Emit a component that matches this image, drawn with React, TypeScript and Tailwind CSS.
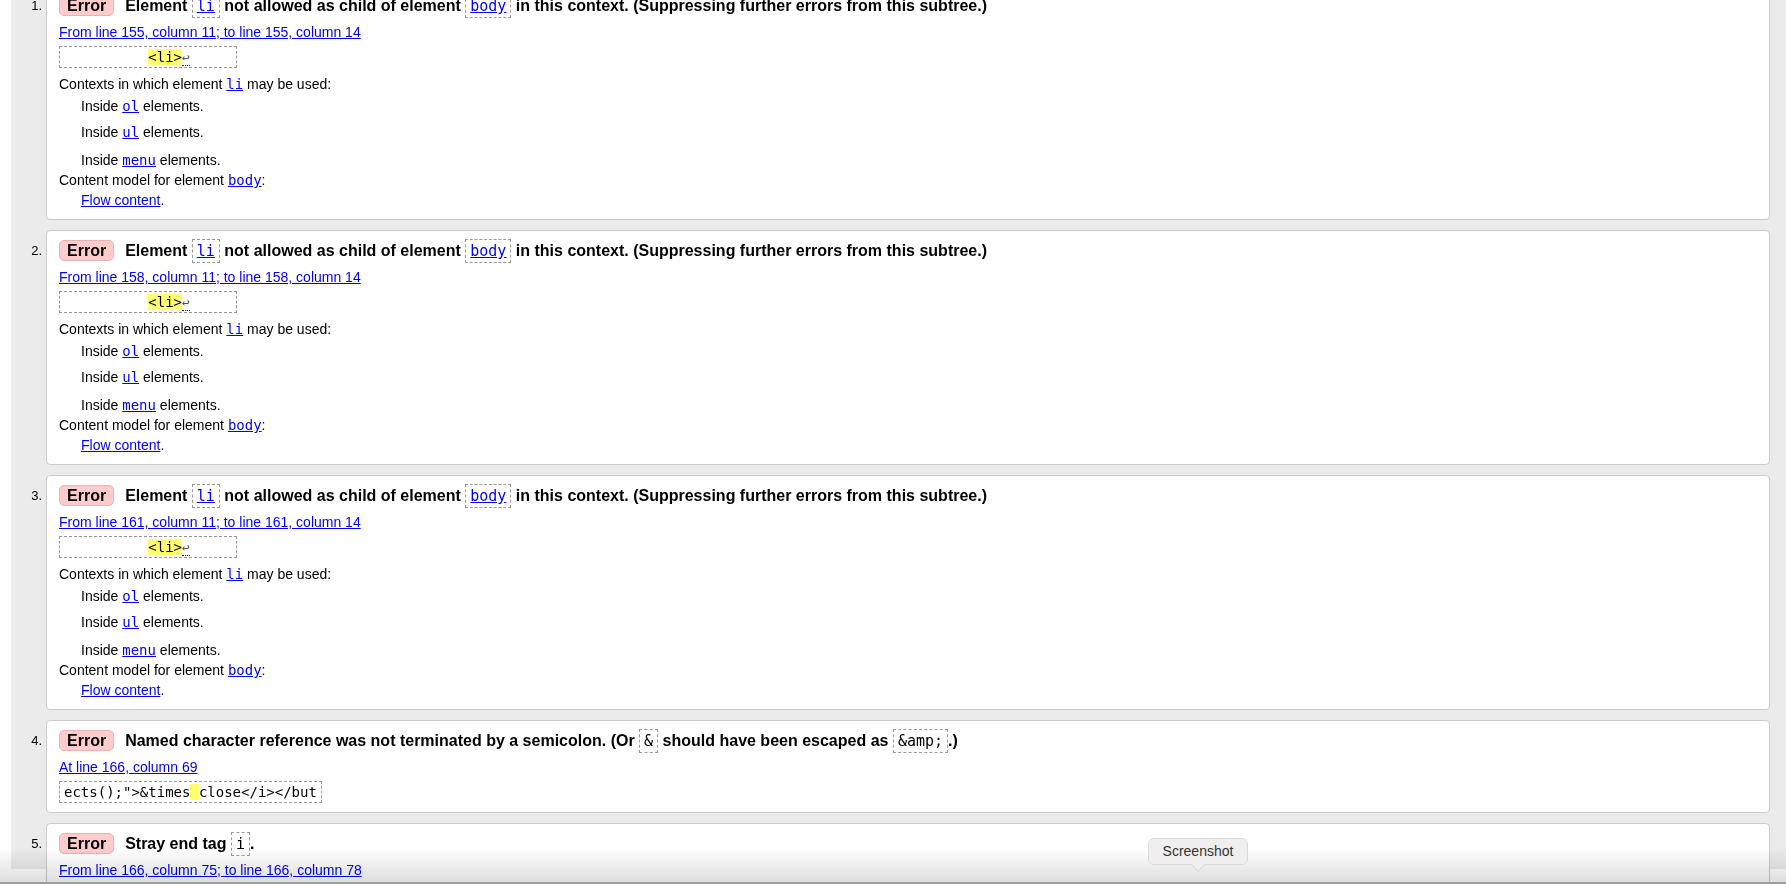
import type { ReactNode } from 'react';

const mono = "font-['DejaVu_Sans_Mono','Liberation_Mono',monospace]";

function TitleCode({ children, link }: { children: ReactNode; link?: boolean }) {
  return (
    <span className={`inline-block border border-dashed border-[#999] px-[4px] leading-[22px] text-[15px] font-normal ${mono}`}>
      {link ? <a className="text-[#0000ee] underline">{children}</a> : children}
    </span>
  );
}

function Mono({ children }: { children: ReactNode }) {
  return <a className={`text-[#0000ee] underline text-[14px] ${mono}`}>{children}</a>;
}

function Badge() {
  return (
    <span className="inline-block mr-[11px] px-[7px] leading-[19px] rounded-[5px] border border-[#e9b3b3] bg-[#ffcccc] text-[16px] font-bold">
      Error
    </span>
  );
}

function Extract({ children }: { children: ReactNode }) {
  return (
    <div className={`mt-[4px] w-fit border border-dashed border-[#999] px-[4px] leading-[20px] text-[14px] whitespace-pre ${mono}`}>
      {children}
    </div>
  );
}

function Mark({ children }: { children: ReactNode }) {
  return <span className="bg-[#ffff70]">{children}</span>;
}

function Lf() {
  return <span className="text-[13px] text-[#555] border-b border-dotted border-[#222] leading-[13px]">↩</span>;
}

function Contexts() {
  return (
    <div className="text-[14px] leading-[20px]">
      <div className="mt-[6px]">
        Contexts in which element <Mono>li</Mono> may be used:
      </div>
      <div className="mt-[2px] pl-[22px]">
        Inside <Mono>ol</Mono> elements.
      </div>
      <div className="mt-[6px] pl-[22px]">
        Inside <Mono>ul</Mono> elements.
      </div>
      <div className="mt-[8px] pl-[22px]">
        Inside <Mono>menu</Mono> elements.
      </div>
      <div>
        Content model for element <Mono>body</Mono>:
      </div>
      <div className="pl-[22px]">
        <a className="text-[#0000ee] underline">Flow content</a>.
      </div>
    </div>
  );
}

function Message({ n, title, where, children }: { n: number; title: ReactNode; where: string; children: ReactNode }) {
  return (
    <div className="flex items-start mb-[10px]">
      <div className="w-[35px] shrink-0 pr-[4px] pt-[9px] text-right text-[13px] leading-[24px]">{n}.</div>
      <div className="flex-1 rounded-[4px] border border-[#cacaca] bg-white px-[12px] pt-[8px] pb-[9px]">
        <div className="text-[16px] font-bold leading-[24px] whitespace-nowrap">
          <Badge />
          {title}
        </div>
        <div className="mt-[4px] text-[14px] leading-[20px]">
          <a className="text-[#0000ee] underline">{where}</a>
        </div>
        {children}
      </div>
    </div>
  );
}

const liTitle = (
  <>
    Element <TitleCode link>li</TitleCode> not allowed as child of element <TitleCode link>body</TitleCode> in this
    context. (Suppressing further errors from this subtree.)
  </>
);

export default function App() {
  return (
    <div className="relative h-[884px] overflow-hidden bg-white pl-[11px] text-black font-['Liberation_Sans',Arial,sans-serif]">
      <div className="h-full bg-[#ebebeb] pr-[16px]">
        <div className="-mt-[15px]">
          {[155, 158, 161].map((line, i) => (
            <Message key={line} n={i + 1} title={liTitle} where={`From line ${line}, column 11; to line ${line}, column 14`}>
              <Extract>
                {'          '}
                <Mark>&lt;li&gt;</Mark>
                <Lf />
                {'     '}
              </Extract>
              <Contexts />
            </Message>
          ))}

          <Message
            n={4}
            title={
              <>
                Named character reference was not terminated by a semicolon. (Or <TitleCode>&amp;</TitleCode> should
                have been escaped as <TitleCode>&amp;amp;</TitleCode>.)
              </>
            }
            where="At line 166, column 69"
          >
            <Extract>
              {'ects();">&times'}
              <Mark> </Mark>
              {'close</i></but'}
            </Extract>
          </Message>

          <Message
            n={5}
            title={
              <>
                Stray end tag <TitleCode>i</TitleCode>.
              </>
            }
            where="From line 166, column 75; to line 166, column 78"
          >
            <Extract>
              {'s();">&times close'}
              <Mark>{'</i>'}</Mark>
              {'</button>'}
            </Extract>
          </Message>
        </div>
      </div>

      <div className="pointer-events-none absolute inset-x-0 bottom-[2px] h-[34px] bg-linear-to-b from-white to-[#dedede] mix-blend-multiply" />
      <div className="absolute inset-x-0 bottom-0 h-[2px] bg-[#9e9e9e]" />

      <div className="absolute left-[1148px] top-[838px] flex h-[27px] w-[100px] items-center justify-center rounded-[6px] border border-[#dcdada] bg-[#f0eeee] text-[14px] text-[#333]">
        Screenshot
        <div className="absolute left-1/2 -bottom-[6px] h-[10px] w-[10px] -translate-x-1/2 rotate-45 border-r border-b border-[#dcdada] bg-[#f0eeee]" />
      </div>
    </div>
  );
}
